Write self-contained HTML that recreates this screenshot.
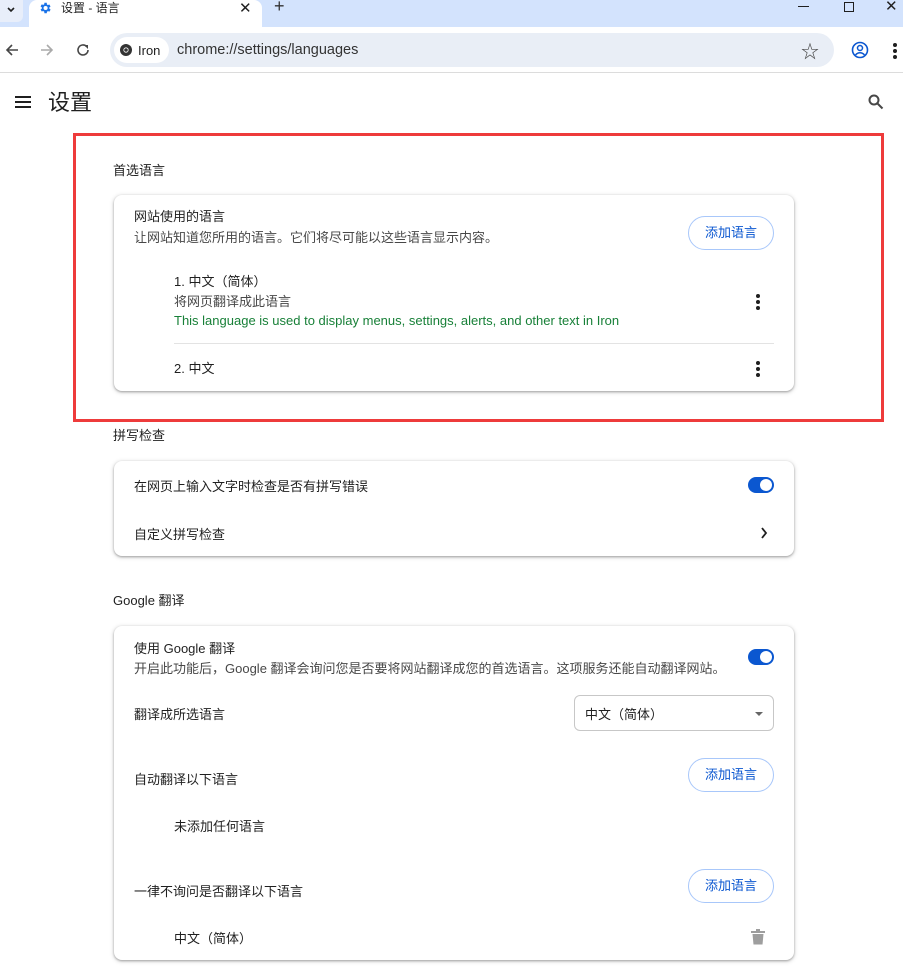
<!DOCTYPE html>
<html><head><meta charset="utf-8"><style>
*{margin:0;padding:0;box-sizing:border-box}
body{width:903px;height:966px;overflow:hidden;background:#fff;font-family:"Liberation Sans","Noto Sans CJK SC",sans-serif;color:#1f1f1f;position:relative;font-size:13px}
.a{position:absolute;white-space:nowrap}
.card{position:absolute;left:114px;width:680px;background:#fff;border-radius:8px;box-shadow:0 1px 2px rgba(0,0,0,.3),0 1px 4px 1px rgba(0,0,0,.12)}
.btn{position:absolute;width:86px;height:34px;border:1px solid #a8c7fa;border-radius:17px;color:#0b57d0;font-size:13px;text-align:center;line-height:32px;background:#fff}
.sub{color:#474747}
.tog{position:absolute;width:26px;height:16px;border-radius:8px;background:#0b57d0}
.tog::after{content:"";position:absolute;right:2px;top:2px;width:12px;height:12px;border-radius:50%;background:#fff}
.dots{position:absolute;width:4px}
.dots i{display:block;width:4px;height:4px;border-radius:50%;background:#1f1f1f;margin-bottom:2px}
</style></head><body>
<div class="a" style="left:0;top:0;width:903px;height:27px;background:#d3e3fd"></div>
<div class="a" style="left:0;top:0;width:23px;height:22px;background:#e8eefa;border-radius:0 0 6px 0"></div>
<svg class="a" style="left:5px;top:4px" width="12" height="12"><path d="M3 4l3 3 3-3" stroke="#1f1f1f" stroke-width="1.6" fill="none"/></svg>
<div class="a" style="left:29px;top:0;width:233px;height:28px;background:#fff;border-radius:8px 8px 0 0"></div>
<svg class="a" style="left:38px;top:1px" width="14" height="14" viewBox="0 0 24 24"><path fill="#1a73e8" d="M19.4 13a7.5 7.5 0 000-2l2.1-1.6-2-3.5-2.5 1a7 7 0 00-1.7-1L15 3h-4l-.4 2.7a7 7 0 00-1.7 1l-2.5-1-2 3.5L6.6 11a7.5 7.5 0 000 2l-2.2 1.6 2 3.5 2.5-1a7 7 0 001.7 1L11 21h4l.4-2.7a7 7 0 001.7-1l2.5 1 2-3.5zM13 15.5a3.5 3.5 0 110-7 3.5 3.5 0 010 7z"/></svg>
<div class="a" style="left:61px;top:0;font-size:12px;line-height:16px">设置 - 语言</div>
<div class="a" style="left:239px;top:-1px;font-size:15px">✕</div>
<div class="a" style="left:274px;top:-4px;font-size:18px;color:#333">+</div>
<div class="a" style="left:798px;top:6px;width:11px;height:1px;background:#1f1f1f"></div>
<div class="a" style="left:844px;top:2px;width:10px;height:10px;border:1px solid #1f1f1f"></div>
<div class="a" style="left:885px;top:-3px;font-size:15px;color:#1f1f1f">✕</div>
<svg class="a" style="left:4px;top:42px" width="16" height="16"><path d="M14 8H3M8 3L3 8l5 5" stroke="#474747" stroke-width="1.6" fill="none"/></svg>
<svg class="a" style="left:39px;top:42px" width="16" height="16"><path d="M2 8h11M8 3l5 5-5 5" stroke="#aaa" stroke-width="1.6" fill="none"/></svg>
<svg class="a" style="left:75px;top:42px" width="16" height="16"><path d="M13 8a5 5 0 11-1.5-3.6" stroke="#474747" stroke-width="1.6" fill="none"/><path d="M9 3h4v4z" fill="#474747"/></svg>
<div class="a" style="left:110px;top:33px;width:724px;height:34px;background:#e9eef6;border-radius:17px"></div>
<div class="a" style="left:114px;top:37px;width:55px;height:26px;background:#fff;border-radius:13px"></div>
<svg class="a" style="left:119px;top:43px" width="14" height="14" viewBox="0 0 14 14"><circle cx="7" cy="7" r="6" fill="#333"/><circle cx="7" cy="7" r="2.6" fill="#fff"/><circle cx="7" cy="7" r="1.8" fill="#333"/></svg>
<div class="a" style="left:138px;top:43px;font-size:13px">Iron</div>
<div class="a" style="left:177px;top:42px;font-size:14.5px;color:#333">chrome://settings/languages</div>
<div class="a" style="left:801px;top:38px;font-size:18px;color:#474747">☆</div>
<svg class="a" style="left:851px;top:41px" width="18" height="18" viewBox="0 0 18 18"><circle cx="9" cy="9" r="7.5" stroke="#0b57d0" stroke-width="1.6" fill="none"/><circle cx="9" cy="7" r="2.5" stroke="#0b57d0" stroke-width="1.5" fill="none"/><path d="M4.5 14c2.5-3 6.5-3 9 0" stroke="#0b57d0" stroke-width="1.5" fill="none"/></svg>
<div class="dots a" style="left:893px;top:43px"><i></i><i></i><i></i></div>
<div class="a" style="left:0;top:72px;width:903px;height:1px;background:#dcdcdc"></div>
<div class="a" style="left:15px;top:96px;width:16px;height:2px;background:#1f1f1f;box-shadow:0 5px 0 #1f1f1f,0 10px 0 #1f1f1f"></div>
<div class="a" style="left:48px;top:89px;font-size:22px;line-height:28px">设置</div>
<svg class="a" style="left:867px;top:93px" width="18" height="18"><circle cx="7" cy="7" r="4.5" stroke="#474747" stroke-width="2" fill="none"/><path d="M10.5 10.5l5 5" stroke="#474747" stroke-width="2"/></svg>

<div class="a" style="left:113px;top:160px">首选语言</div>
<div class="card" style="top:195px;height:196px">
 <div class="a" style="left:20px;top:11px">网站使用的语言</div>
 <div class="a sub" style="left:20px;top:32px">让网站知道您所用的语言。它们将尽可能以这些语言显示内容。</div>
 <div class="btn" style="left:574px;top:21px">添加语言</div>
 <div class="a" style="left:60px;top:76px">1. 中文（简体）</div>
 <div class="a sub" style="left:60px;top:96px">将网页翻译成此语言</div>
 <div class="a" style="left:60px;top:118px;color:#188038">This language is used to display menus, settings, alerts, and other text in Iron</div>
 <div class="dots" style="left:642px;top:99px"><i></i><i></i><i></i></div>
 <div class="a" style="left:60px;top:148px;width:600px;height:1px;background:#e3e3e3"></div>
 <div class="a" style="left:60px;top:163px">2. 中文</div>
 <div class="dots" style="left:642px;top:166px"><i></i><i></i><i></i></div>
</div>
<div class="a" style="left:73px;top:133px;width:811px;height:289px;border:3px solid #ee3b3b"></div>

<div class="a" style="left:113px;top:425px">拼写检查</div>
<div class="card" style="top:461px;height:95px">
 <div class="a" style="left:20px;top:15px">在网页上输入文字时检查是否有拼写错误</div>
 <div class="tog" style="left:634px;top:16px"></div>
 <div class="a" style="left:20px;top:63px">自定义拼写检查</div>
 <svg class="a" style="left:646px;top:66px" width="8" height="12"><path d="M2 1l4 5-4 5" stroke="#1f1f1f" stroke-width="1.8" fill="none"/></svg>
</div>

<div class="a" style="left:113px;top:590px">Google 翻译</div>
<div class="card" style="top:626px;height:334px">
 <div class="a" style="left:20px;top:12px">使用 Google 翻译</div>
 <div class="a sub" style="left:20px;top:32px">开启此功能后，Google 翻译会询问您是否要将网站翻译成您的首选语言。这项服务还能自动翻译网站。</div>
 <div class="tog" style="left:634px;top:23px"></div>
 <div class="a" style="left:20px;top:78px">翻译成所选语言</div>
 <div class="a" style="left:460px;top:69px;width:200px;height:36px;border:1px solid #c7c7c7;border-radius:6px"></div>
 <div class="a" style="left:471px;top:78px">中文（简体）</div>
 <div class="a" style="left:641px;top:86px;width:0;height:0;border-left:4px solid transparent;border-right:4px solid transparent;border-top:4px solid #666"></div>
 <div class="a" style="left:20px;top:143px">自动翻译以下语言</div>
 <div class="btn" style="left:574px;top:132px">添加语言</div>
 <div class="a" style="left:60px;top:190px">未添加任何语言</div>
 <div class="a" style="left:20px;top:255px">一律不询问是否翻译以下语言</div>
 <div class="btn" style="left:574px;top:243px">添加语言</div>
 <div class="a" style="left:60px;top:302px">中文（简体）</div>
 <svg class="a" style="left:637px;top:303px" width="14" height="16"><rect x="0" y="2" width="14" height="2" fill="#9e9e9e"/><rect x="5" y="0" width="4" height="2" fill="#9e9e9e"/><path d="M1.5 5h11l-1 10.5h-9z" fill="#9e9e9e"/></svg>
</div>
</body></html>
